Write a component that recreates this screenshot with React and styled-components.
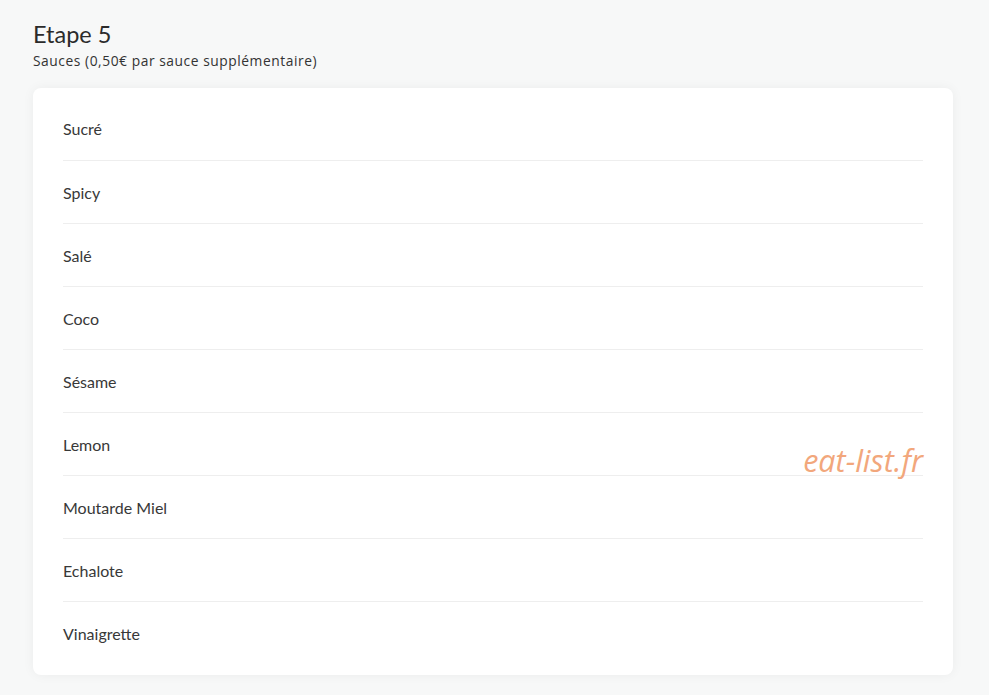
import React from "react";
import styled, { createGlobalStyle } from "styled-components";

const Global = createGlobalStyle`
  html, body { margin: 0; padding: 0; background: #f7f8f8; }
  body { font-family: Lato, "Open Sans", sans-serif; color: #333; }
`;

const Page = styled.div`
  padding: 20px 36px 20px 33px;
  box-sizing: border-box;
  width: 989px;
  height: 695px;
`;

const Title = styled.h2`
  margin: 0;
  font-family: Lato, sans-serif;
  font-weight: 400;
  font-size: 23.5px;
  line-height: 28px;
  color: #2b2b2b;
`;

const Subtitle = styled.p`
  margin: 4px 0 0;
  font-family: "Open Sans", "Noto Sans", sans-serif;
  font-size: 13.8px;
  line-height: 18px;
  letter-spacing: 0.55px;
  color: #333;
`;

const Card = styled.div`
  position: relative;
  margin-top: 18px;
  background: #fff;
  border-radius: 8px;
  box-shadow: 0 0 12px rgba(0, 0, 0, 0.05);
  padding: 9px 30px 11px;
`;

const List = styled.ul`
  list-style: none;
  margin: 0;
  padding: 0;
`;

const Item = styled.li`
  height: 63px;
  display: flex;
  align-items: center;
  font-size: 16px;
  color: #383838;
  border-top: ${(p) => (p.$first ? "none" : "1px solid #eeeeee")};
  box-sizing: border-box;
`;

const Watermark = styled.span`
  position: absolute;
  right: 30px;
  top: 351px;
  font-family: "Open Sans", sans-serif;
  font-style: italic;
  font-size: 30.5px;
  color: #f2a77c;
`;

const sauces = [
  "Sucré",
  "Spicy",
  "Salé",
  "Coco",
  "Sésame",
  "Lemon",
  "Moutarde Miel",
  "Echalote",
  "Vinaigrette",
];

export default function App() {
  return (
    <>
      <Global />
      <Page>
        <Title>Etape 5</Title>
        <Subtitle>Sauces (0,50€ par sauce supplémentaire)</Subtitle>
        <Card>
          <List>
            {sauces.map((s, i) => (
              <Item key={s} $first={i === 0}>
                {s}
              </Item>
            ))}
          </List>
          <Watermark>eat-list.fr</Watermark>
        </Card>
      </Page>
    </>
  );
}
